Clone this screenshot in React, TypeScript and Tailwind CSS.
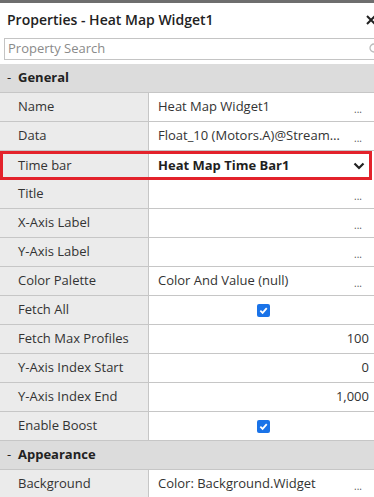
import React from "react";

type Row = {
  label: string;
  value?: string;
  kind?: "text" | "ellipsis" | "number" | "check" | "select";
};

const general: Row[] = [
  { label: "Name", value: "Heat Map Widget1", kind: "ellipsis" },
  { label: "Data", value: "Float_10 (Motors.A)@Stream…", kind: "ellipsis" },
  { label: "Time bar", value: "Heat Map Time Bar1", kind: "select" },
  { label: "Title", value: "", kind: "ellipsis" },
  { label: "X-Axis Label", value: "", kind: "ellipsis" },
  { label: "Y-Axis Label", value: "", kind: "ellipsis" },
  { label: "Color Palette", value: "Color And Value (null)", kind: "ellipsis" },
  { label: "Fetch All", kind: "check" },
  { label: "Fetch Max Profiles", value: "100", kind: "number" },
  { label: "Y-Axis Index Start", value: "0", kind: "number" },
  { label: "Y-Axis Index End", value: "1,000", kind: "number" },
  { label: "Enable Boost", kind: "check" },
];

const appearance: Row[] = [
  { label: "Background", value: "Color: Background.Widget", kind: "ellipsis" },
];

function Check() {
  return (
    <span className="w-[13px] h-[13px] rounded-[2px] bg-[#1a73e8] flex items-center justify-center">
      <svg width="9" height="9" viewBox="0 0 10 10">
        <path d="M1.5 5.2 L4 7.6 L8.6 2.4" stroke="white" strokeWidth="2" fill="none" />
      </svg>
    </span>
  );
}

function PropRow({ row }: { row: Row }) {
  const selected = row.kind === "select";
  return (
    <div
      className={`flex h-[29px] ${
        selected ? "w-[372px] border-[3px] border-[#e3222b]" : "border-b border-[#c6c6c6]"
      }`}
    >
      <div
        className={`${selected ? "w-[146px] pl-[15px]" : "w-[149px] pl-[18px]"} shrink-0 bg-[#ebebeb] border-r border-[#c6c6c6] flex items-center text-[#333]`}
      >
        {row.label}
      </div>
      <div className={`flex-1 flex items-center ${selected ? "pl-[9px] pr-[4px]" : "pl-[9px] pr-[5px]"} text-[#333]`}>
        {row.kind === "ellipsis" && (
          <>
            <span className="flex-1 truncate">{row.value}</span>
            <span className="text-[10px] text-[#555] mt-[4px] mr-[7px]">...</span>
          </>
        )}
        {row.kind === "number" && <span className="flex-1 text-right">{row.value}</span>}
        {row.kind === "check" && (
          <span className="flex-1 flex justify-center">
            <Check />
          </span>
        )}
        {row.kind === "select" && (
          <>
            <span className="flex-1 font-bold text-[#1f1f1f]">{row.value}</span>
            <svg width="12" height="8" viewBox="0 0 12 8">
              <path d="M1.5 1.5 L6 6 L10.5 1.5" stroke="#222" strokeWidth="2.2" fill="none" />
            </svg>
          </>
        )}
      </div>
    </div>
  );
}

function Section({ title }: { title: string }) {
  return (
    <div className="flex items-center h-[29px] bg-[#dcdcdc] border-b border-[#c6c6c6] text-[13px]">
      <span className="pl-[7px] w-[18px] text-[#222]">-</span>
      <span className="font-bold text-[#222]">{title}</span>
    </div>
  );
}

export default function App() {
  return (
    <div
      className="w-[374px] h-[497px] overflow-hidden bg-white text-[13px]"
      style={{ fontFamily: '"Open Sans", "Noto Sans", sans-serif' }}
    >
      <div className="h-[3px] bg-[#6e6e6e]" />
      <div className="w-[384px] h-[33px] flex items-center justify-between pl-[7px] pr-[8px]">
        <span className="text-[14px] font-semibold text-[#222]">Properties - Heat Map Widget1</span>
        <svg width="10" height="10" viewBox="0 0 10 10">
          <path d="M1 1 L9 9 M9 1 L1 9" stroke="#222" strokeWidth="2" />
        </svg>
      </div>
      <div className="ml-[4px] mt-[2px] w-[384px] h-[22px] border border-[#c4c4c4] flex items-center justify-between pl-[3px] pr-[6px]">
        <span className="text-[#8a8a8a]">Property Search</span>
        <svg width="12" height="12" viewBox="0 0 12 12">
          <circle cx="5" cy="5" r="4" stroke="#bbb" strokeWidth="1.3" fill="none" />
          <path d="M8 8 L11 11" stroke="#bbb" strokeWidth="1.3" />
        </svg>
      </div>
      <div className="h-[4px]" />
      <Section title="General" />
      {general.map((r) => (
        <PropRow key={r.label} row={r} />
      ))}
      <Section title="Appearance" />
      {appearance.map((r) => (
        <PropRow key={r.label} row={r} />
      ))}
    </div>
  );
}
